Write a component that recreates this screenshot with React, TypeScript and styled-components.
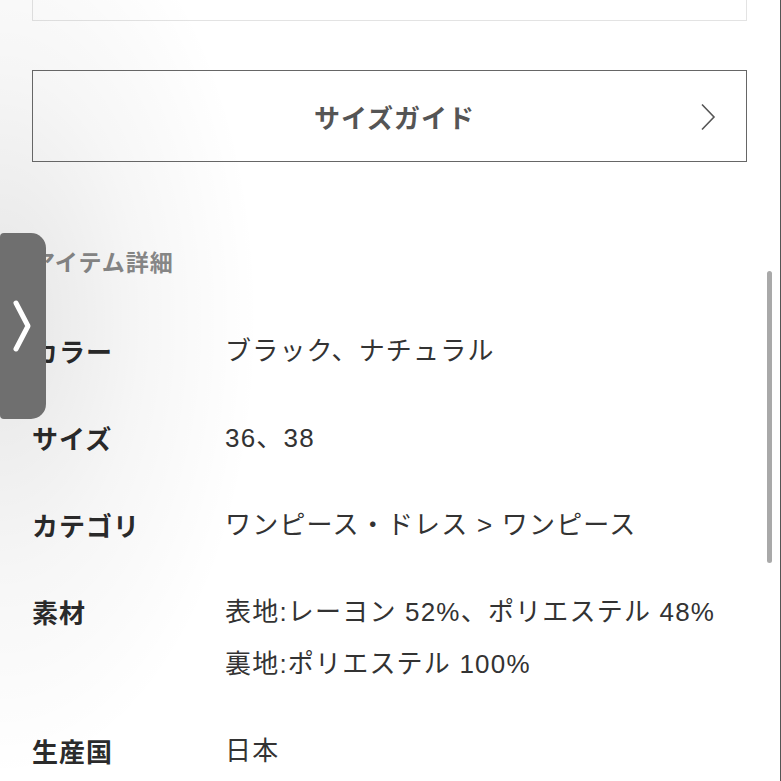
import React from "react";
import styled, { createGlobalStyle } from "styled-components";

const Global = createGlobalStyle`
  html, body { margin: 0; padding: 0; background: #fff; }
  body { font-family: "Noto Sans CJK JP", "Noto Sans", sans-serif; overflow: hidden; }
`;

const Page = styled.div`
  position: relative;
  width: 781px;
  height: 781px;
  overflow: hidden;
  background: #fff;
  box-sizing: border-box;
  padding: 0 33px 0 32px;
  border-right: 1px solid #555;
`;

const Shade = styled.div`
  position: absolute;
  inset: 0;
  pointer-events: none;
  background:
    radial-gradient(ellipse 260px 460px at 0px 320px, rgba(0,0,0,0.10), rgba(0,0,0,0.035) 55%, rgba(0,0,0,0) 100%);
`;

const TopBox = styled.div`
  height: 20px;
  border: 1px solid #e3e3e3;
  border-top: none;
  background: #fff;
`;

const GuideButton = styled.button`
  margin-top: 49px;
  width: 100%;
  height: 92px;
  box-sizing: border-box;
  border: 1.5px solid #666;
  background: transparent;
  display: flex;
  align-items: center;
  justify-content: center;
  position: relative;
  font-family: "Noto Sans CJK JP", sans-serif;
  font-size: 26px;
  font-weight: 700;
  color: #555;
  letter-spacing: 1px;
  padding: 0 0 0 10px;
`;

const GuideChevron = styled.svg`
  position: absolute;
  right: 30px;
  top: 32px;
`;

const Section = styled.section`
  margin-top: 73px;
`;

const Heading = styled.h2`
  margin: 0 0 38px;
  font-size: 23px;
  line-height: 52px;
  font-weight: 700;
  letter-spacing: 1px;
  color: #8a8a8a;
`;

const Rows = styled.dl`
  margin: 0;
  display: flex;
  flex-direction: column;
  gap: 35px;
`;

const Row = styled.div`
  display: grid;
  grid-template-columns: 193px 1fr;
`;

const Label = styled.dt`
  font-family: "Noto Sans CJK JP", sans-serif;
  font-size: 26px;
  line-height: 52px;
  font-weight: 700;
  letter-spacing: 1px;
  color: #2b2b2b;
`;

const Value = styled.dd`
  margin: 0;
  font-family: "Liberation Sans", "Noto Sans CJK JP", sans-serif;
  font-size: 26px;
  line-height: 52px;
  font-weight: 400;
  letter-spacing: 1.2px;
  color: #333;
`;

const ValueLine = styled.div``;

const SideTab = styled.div`
  position: absolute;
  left: 0;
  top: 233px;
  width: 46px;
  height: 186px;
  background: #6f6f6f;
  border-radius: 4px 15px 15px 4px;
  display: flex;
  align-items: center;
  justify-content: center;
`;

const Scrollbar = styled.div`
  position: absolute;
  right: 8px;
  top: 271px;
  width: 5px;
  height: 292px;
  border-radius: 3px;
  background: #a9a9a9;
`;

const rows: { label: string; values: string[] }[] = [
  { label: "カラー", values: ["ブラック、ナチュラル"] },
  { label: "サイズ", values: ["36、38"] },
  { label: "カテゴリ", values: ["ワンピース・ドレス > ワンピース"] },
  { label: "素材", values: ["表地:レーヨン 52%、ポリエステル 48%", "裏地:ポリエステル 100%"] },
  { label: "生産国", values: ["日本"] },
];

export default function App() {
  return (
    <Page>
      <Global />
      <Shade />
      <TopBox />
      <GuideButton>
        サイズガイド
        <GuideChevron width="16" height="28" viewBox="0 0 16 28">
          <polyline points="2,1.5 14,14 2,26.5" fill="none" stroke="#555" strokeWidth="1.6" />
        </GuideChevron>
      </GuideButton>
      <Section>
        <Heading>アイテム詳細</Heading>
        <Rows>
          {rows.map((r) => (
            <Row key={r.label}>
              <Label>{r.label}</Label>
              <Value>
                {r.values.map((v) => (
                  <ValueLine key={v}>{v}</ValueLine>
                ))}
              </Value>
            </Row>
          ))}
        </Rows>
      </Section>
      <SideTab>
        <svg width="24" height="54" viewBox="0 0 24 54">
          <polyline points="5,4 17,27 5,50" fill="none" stroke="#fff" strokeWidth="5" strokeLinecap="round" strokeLinejoin="round" />
        </svg>
      </SideTab>
      <Scrollbar />
    </Page>
  );
}
